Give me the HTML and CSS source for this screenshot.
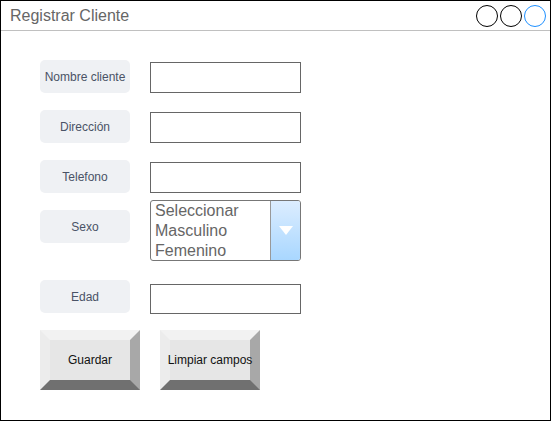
FILE: index.html
```html
<!DOCTYPE html>
<html lang="es">

<head>
    <meta charset="UTF-8">
    <meta name="viewport" content="width=device-width, initial-scale=1.0">
    <title>Registrar Cliente</title>
    <link rel="stylesheet" href="styles.css">
</head>

<body>
    <div class="window">
        <div class="title-bar">
            <span class="title">Registrar Cliente</span>
            <div class="controls">
                <span class="dot"></span>
                <span class="dot"></span>
                <span class="dot blue"></span>
            </div>
        </div>

        <div class="form">
            <div class="row row-first">
                <div class="label">Nombre cliente</div>
                <div class="field"></div>
            </div>
            <div class="row">
                <div class="label">Dirección</div>
                <div class="field"></div>
            </div>
            <div class="row">
                <div class="label">Telefono</div>
                <div class="field"></div>
            </div>
            <div class="row row-sexo">
                <div class="label">Sexo</div>
                <div class="listbox">
                    <div class="options">
                        <div>Seleccionar</div>
                        <div>Masculino</div>
                        <div>Femenino</div>
                    </div>
                    <div class="arrow">
                        <svg width="14" height="10" viewBox="0 0 14 10">
                            <polygon points="0,0 14,0 7,9" fill="#ffffff" />
                        </svg>
                    </div>
                </div>
            </div>
            <div class="row row-edad">
                <div class="label">Edad</div>
                <div class="field field-edad"></div>
            </div>
            <div class="buttons">
                <div class="bevel-btn">Guardar</div>
                <div class="bevel-btn">Limpiar campos</div>
            </div>
        </div>
    </div>
</body>

</html>
```

FILE: styles.css
```css
* {
    margin: 0;
    padding: 0;
    box-sizing: border-box;
}

body {
    width: 551px;
    height: 421px;
    background-color: #ffffff;
    font-family: "Liberation Sans", Arial, sans-serif;
}

.window {
    width: 551px;
    height: 421px;
    border: 1px solid #000000;
}

.title-bar {
    height: 30px;
    border-bottom: 1px solid #c0c0c0;
    display: flex;
    justify-content: space-between;
    align-items: center;
    padding-left: 9px;
    padding-right: 4px;
}

.title {
    font-size: 16px;
    color: #666666;
}

.controls {
    display: flex;
    gap: 2px;
    margin-top: 1px;
}

.dot {
    width: 22px;
    height: 22px;
    border: 1px solid #000000;
    border-radius: 50%;
}

.dot.blue {
    border-color: #1e90ff;
}

.form {
    padding-left: 39px;
}

.row {
    display: flex;
    align-items: center;
    gap: 20px;
    height: 33px;
    margin-top: 17px;
}

.row-first {
    margin-top: 29px;
}

.label {
    width: 90px;
    height: 33px;
    border-radius: 5px;
    background-color: #eff1f4;
    color: #4a5366;
    font-size: 12px;
    display: flex;
    justify-content: center;
    align-items: center;
}

.field {
    width: 151px;
    height: 31px;
    border: 1px solid #666666;
    margin-top: 1px;
}

.row-sexo {
    height: 61px;
    margin-top: 7px;
    align-items: flex-start;
}

.row-sexo .label {
    margin-top: 10px;
}

.listbox {
    width: 151px;
    height: 61px;
    border: 1px solid #777777;
    border-radius: 3px;
    display: flex;
    overflow: hidden;
}

.options {
    flex: 1;
    padding-left: 4px;
    font-size: 16px;
    line-height: 20px;
    color: #666666;
}

.arrow {
    width: 30px;
    border-left: 1px solid #999999;
    background: linear-gradient(#dcedff, #a9d7ff);
    display: flex;
    justify-content: center;
    align-items: center;
    padding-top: 1px;
}

.row-edad {
    margin-top: 19px;
}

.field-edad {
    height: 30px;
    margin-top: 5px;
}

.buttons {
    display: flex;
    gap: 20px;
    margin-top: 17px;
}

.bevel-btn {
    width: 100px;
    height: 60px;
    border: 10px solid;
    border-color: #f2f2f2 #a8a8a8 #707070 #ececec;
    background-color: #e6e6e6;
    font-size: 12px;
    color: #111111;
    white-space: nowrap;
    display: flex;
    justify-content: center;
    align-items: center;
}
```
